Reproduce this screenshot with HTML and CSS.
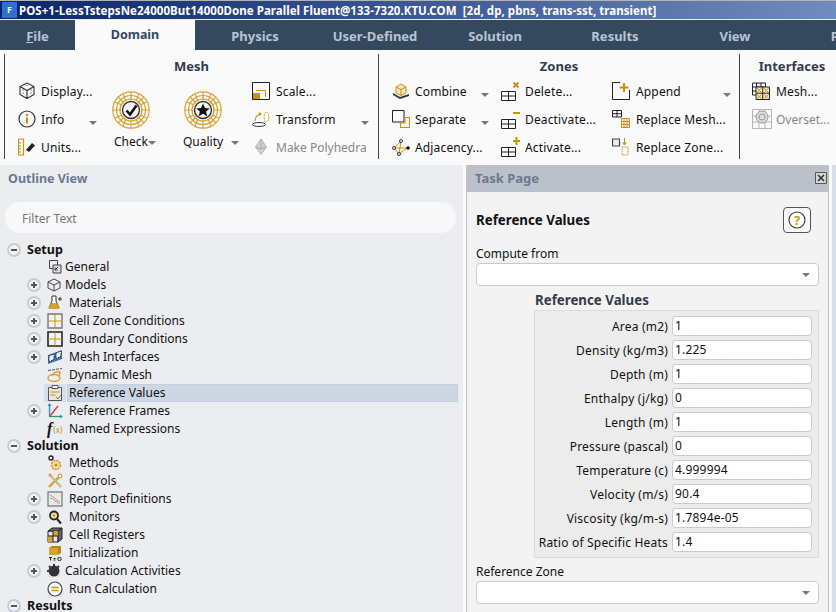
FILE: index.html
```html
<!DOCTYPE html>
<html lang="en">
<head>
    <meta charset="UTF-8">
    <title>Fluent</title>
    <link rel="stylesheet" href="styles.css">
</head>
<body>
    <svg class="defs" width="0" height="0">
        <symbol id="radial" viewBox="0 0 38 38">
            <g fill="none" stroke="#d9a12e" stroke-width="1.2">
                <circle cx="19" cy="19" r="18.2"/>
                <circle cx="19" cy="19" r="14.5"/>
                <circle cx="19" cy="19" r="11"/>
                <path d="M19 1v8M19 29v8M1 19h8M29 19h8M6 6l6 6M26 26l6 6M32 6l-6 6M12 26l-6 6M11 3l3 7M24 28l3 7M27 3l-3 7M14 28l-3 7M3 11l7 3M28 24l7 3M35 11l-7 3M10 24l-7 3"/>
            </g>
            <circle cx="19" cy="19" r="8.5" fill="#f4f4f4" stroke="#333" stroke-width="1.4"/>
        </symbol>
        <symbol id="grid" viewBox="0 0 20 20">
            <path d="M1.500 10.500h14v9h-14zM8.500 10.500v9M1.500 15h14" fill="none" stroke="#222" stroke-width="1"/>
        </symbol>
    </svg>

    <div class="titlebar">
        <span class="app-icon">F</span>
        <span class="title-text">POS+1-LessTstepsNe24000But14000Done Parallel Fluent@133-7320.KTU.COM&nbsp; [2d, dp, pbns, trans-sst, transient]</span>
    </div>

    <div class="tabs">
        <div class="tab tab-file"><u>F</u>ile</div>
        <div class="tab active">Domain</div>
        <div class="tab">Physics</div>
        <div class="tab">User-Defined</div>
        <div class="tab">Solution</div>
        <div class="tab">Results</div>
        <div class="tab">View</div>
        <div class="tab">Parallel</div>
    </div>

    <div class="ribbon">
        <section class="group group-mesh">
            <h3>Mesh</h3>
            <div class="group-body">
                <div class="tool-col col-a">
                    <div class="tool">
                        <svg class="icon" width="18" height="18" viewBox="0 0 18 18"><path d="M9 1l7 3.500v8L9 16.500 2 12.500v-8zM2 4.500l7 4 7-4M9 8.500v8" fill="none" stroke="#333" stroke-width="1.100"/><path d="M9 3.500h.1M5 8h.1M13 8h.1M5 11h.1M13 11h.1" stroke="#333" stroke-width="1.200" stroke-linecap="round"/></svg>
                        <span>Display...</span>
                    </div>
                    <div class="tool">
                        <svg class="icon" width="18" height="18" viewBox="0 0 18 18"><circle cx="9" cy="9" r="8" fill="#fafafa" stroke="#333" stroke-width="1.200"/><path d="M9 7.500v6" stroke="#c8920f" stroke-width="2"/><circle cx="9" cy="5" r="1.200" fill="#c8920f"/></svg>
                        <span>Info</span><i class="drop"></i>
                    </div>
                    <div class="tool">
                        <svg class="icon" width="18" height="18" viewBox="0 0 18 18"><path d="M.5 1h5v16h-5zM.5 5h2.500M.5 8h2.500M.5 11h2.500M.5 14h2.500" fill="none" stroke="#c8920f" stroke-width="1.200"/><path d="M8 12l6-7 3 2.500-6 6.500z" fill="#222"/></svg>
                        <span>Units...</span>
                    </div>
                </div>
                <div class="big-tool col-check">
                    <svg class="big-icon" width="38" height="38"><use href="#radial"/></svg>
                    <div class="big-label label-check"><span>Check</span><i class="drop"></i></div>
                    <svg class="big-mark" width="38" height="38" viewBox="0 0 38 38"><path d="M14.500 19.500l3.500 4 6.500-9" fill="none" stroke="#111" stroke-width="2.600"/></svg>
                </div>
                <div class="big-tool col-quality">
                    <svg class="big-icon" width="38" height="38"><use href="#radial"/></svg>
                    <div class="big-label label-quality"><span>Quality</span><i class="drop"></i></div>
                    <svg class="big-mark" width="38" height="38" viewBox="0 0 38 38"><path d="M19 12.500l2 4.500 4.800.4-3.700 3.100 1.200 4.800-4.300-2.600-4.300 2.600 1.200-4.800-3.700-3.100 4.800-.4z" fill="#111"/></svg>
                </div>
                <div class="tool-col col-c">
                    <div class="tool">
                        <svg class="icon" width="18" height="18" viewBox="0 0 18 18"><path d="M.5.500h17v17H.5z" fill="#fafafa" stroke="#222"/><path d="M4 8.500h9.500V15" fill="none" stroke="#c8920f"/><path d="M1 11h7v6H1z" fill="#c8920f"/></svg>
                        <span>Scale...</span>
                    </div>
                    <div class="tool">
                        <svg class="icon" width="18" height="18" viewBox="0 0 18 18"><ellipse cx="7" cy="14.500" rx="6.500" ry="2" fill="none" stroke="#333"/><path d="M3 11c0-4 2-6 6-7" fill="none" stroke="#c8920f" stroke-width="1.200"/><path d="M7 2l3 2-3 2z" fill="#c8920f"/><ellipse cx="14.500" cy="7" rx="2.300" ry="5" fill="none" stroke="#c8920f" stroke-dasharray="1.500 1"/></svg>
                        <span>Transform</span><i class="drop"></i>
                    </div>
                    <div class="tool disabled">
                        <svg class="icon" width="18" height="18" viewBox="0 0 18 18"><path d="M9 1l5.500 8L9 16.500 3.500 9z" fill="#d2d0cc" stroke="#b5b3ae"/><path d="M3.500 9L9 11l5.500-2M9 1v10" fill="none" stroke="#aaa"/></svg>
                        <span>Make Polyhedra</span>
                    </div>
                </div>
            </div>
        </section>

        <section class="group group-zones">
            <h3>Zones</h3>
            <div class="group-body">
                <div class="tool-col col-d">
                    <div class="tool">
                        <svg class="icon" width="18" height="18" viewBox="0 0 18 18"><path d="M1 11l7 4 9-3v2l-9 3-7-4z" fill="#333"/><path d="M4 5l5-3 5 3v6l-5 2.500-5-2.500z" fill="#f6e7c3" stroke="#c8920f"/><path d="M4 5l5 2.500L14 5M9 7.500v6" fill="none" stroke="#c8920f"/></svg>
                        <span>Combine</span><i class="drop"></i>
                    </div>
                    <div class="tool">
                        <svg class="icon" width="18" height="18" viewBox="0 0 18 18"><path d="M.5.500h11.500v11.500H.5z" fill="none" stroke="#222"/><path d="M8.500 17.500V13H13V7.500h4.500v10z" fill="none" stroke="#c8920f" stroke-width="1.100"/></svg>
                        <span>Separate</span><i class="drop"></i>
                    </div>
                    <div class="tool">
                        <svg class="icon" width="18" height="18" viewBox="0 0 18 18"><path d="M2 10l7-7M2 10l5 6M7 16l8-6H2M9 3l-2 13" fill="none" stroke="#c8920f"/><circle cx="2" cy="10" r="1.500" fill="#fafafa" stroke="#333"/><circle cx="9" cy="3" r="1.500" fill="#fafafa" stroke="#333"/><circle cx="7" cy="16" r="1.500" fill="#fafafa" stroke="#333"/><circle cx="16" cy="10" r="1.800" fill="#111"/></svg>
                        <span>Adjacency...</span>
                    </div>
                </div>
                <div class="tool-col col-e">
                    <div class="tool">
                        <svg class="icon" width="20" height="20" viewBox="0 0 20 20"><use href="#grid"/><path d="M13.500 1.500l5 5M18.500 1.500l-5 5" stroke="#c8920f" stroke-width="2"/></svg>
                        <span>Delete...</span>
                    </div>
                    <div class="tool">
                        <svg class="icon" width="20" height="20" viewBox="0 0 20 20"><use href="#grid"/><path d="M13 4h8" stroke="#c8920f" stroke-width="2"/></svg>
                        <span>Deactivate...</span>
                    </div>
                    <div class="tool">
                        <svg class="icon" width="20" height="20" viewBox="0 0 20 20"><use href="#grid"/><path d="M16.500 0v8M13 4h8" stroke="#c8920f" stroke-width="2"/></svg>
                        <span>Activate...</span>
                    </div>
                </div>
                <div class="tool-col col-f">
                    <div class="tool">
                        <svg class="icon" width="18" height="18" viewBox="0 0 18 18"><path d="M8 .500H.5v17h17V8" fill="none" stroke="#222"/><path d="M12 1v9M7.500 5.500h9" stroke="#c8920f" stroke-width="2"/></svg>
                        <span>Append</span><i class="drop"></i>
                    </div>
                    <div class="tool">
                        <svg class="icon" width="18" height="18" viewBox="0 0 18 18"><path d="M.5.500H9.500V7H.5zM5 .500V7M.5 3.700h9" fill="none" stroke="#222"/><path d="M9.500 8.500h8v9h-8zM12 8.500v9M15 8.500v9M9.500 11.500h8M9.500 14.500h8" fill="none" stroke="#c8920f"/></svg>
                        <span>Replace Mesh...</span>
                    </div>
                    <div class="tool">
                        <svg class="icon" width="18" height="18" viewBox="0 0 18 18"><path d="M.5 1h7v7h-7z" fill="#eee" stroke="#444" stroke-width="1.200"/><path d="M10 9h6v8h-6z" fill="none" stroke="#c8920f" stroke-dasharray="1.500 1"/><path d="M12.500 0v6M10.500 4l2 3 2-3" fill="none" stroke="#c8920f"/></svg>
                        <span>Replace Zone...</span>
                    </div>
                </div>
            </div>
        </section>

        <section class="group group-interfaces">
            <h3>Interfaces</h3>
            <div class="group-body">
                <div class="tool-col">
                    <div class="tool">
                        <svg class="icon" width="18" height="18" viewBox="0 0 18 18"><path d="M.5 1h13v12H.5zM.5 5h13M.5 9h13M4.500 1v12M9 1v12" fill="none" stroke="#222"/><path d="M4 5h13.500v12.500H4z" fill="#f8ecd2" stroke="#222"/><path d="M10.700 5v12.500M4 11.200h13.500" stroke="#222"/><path d="M5 6l4.500 4.500M9.500 6L5 10.500M12 6l4.500 4.500M16.500 6L12 10.500M5 12.500l4.500 4M9.500 12.500L5 16.500M12 12.500l4.500 4M16.500 12.500L12 16.500" stroke="#c8920f"/></svg>
                        <span>Mesh...</span>
                    </div>
                    <div class="tool disabled">
                        <svg class="icon icon-wide" width="20" height="20" viewBox="0 0 20 20"><path d="M.5.500h19v19H.5zM.5 7h19M.5 13h19M7 .500v19M13 .500v19" fill="none" stroke="#b5b5b5"/><circle cx="10" cy="8" r="6" fill="#ddd" stroke="#999"/><circle cx="10" cy="8" r="3" fill="none" stroke="#999"/></svg>
                        <span>Overset...</span>
                    </div>
                </div>
            </div>
        </section>
    </div>

    <div class="main">
        <div class="outline">
            <div class="panel-title">Outline View</div>
            <div class="filter">Filter Text</div>

            <div class="tree">
                <div class="root"><i class="exp minus"></i><b>Setup</b></div>

                <div class="node tight"><i class="exp none"></i>
                    <span class="node-icon"><svg width="16" height="16" viewBox="0 0 16 16"><path d="M2.500 1.500h8v8h-8z" fill="#eee" stroke="#444"/><path d="M6 6h8v8H6z" fill="#ddd" stroke="#444"/><path d="M11 8l-3 3M8 8.500V11h2.500" fill="none" stroke="#333"/></svg></span>
                    <span class="node-label">General</span></div>
                <div class="node tight"><i class="exp plus"></i>
                    <span class="node-icon"><svg width="14" height="14" viewBox="0 0 14 14"><path d="M7 1l6 3v6l-6 3-6-3V4zM1 4l6 3 6-3M7 7v6" fill="none" stroke="#444"/></svg></span>
                    <span class="node-label">Models</span></div>
                <div class="node"><i class="exp plus"></i>
                    <span class="node-icon"><svg width="16" height="16" viewBox="0 0 16 16"><path d="M5 1h4v5l3 7H2l3-7z" fill="#fafafa" stroke="#333"/><path d="M4 8h6l2.500 6h-11z" fill="#d9a12e"/><path d="M13 2v4M11 4h4" stroke="#333"/></svg></span>
                    <span class="node-label">Materials</span></div>
                <div class="node"><i class="exp plus"></i>
                    <span class="node-icon"><svg width="16" height="16" viewBox="0 0 16 16"><path d="M1 1h14v14H1z" fill="#f2f2f2" stroke="#777" stroke-width="1.400"/><path d="M8 1v14M1 8h14" stroke="#c8920f"/></svg></span>
                    <span class="node-label">Cell Zone Conditions</span></div>
                <div class="node"><i class="exp plus"></i>
                    <span class="node-icon"><svg width="16" height="16" viewBox="0 0 16 16"><path d="M1 1h14v14H1z" fill="#f2f2f2" stroke="#222" stroke-width="1.600"/><path d="M8 1v14M1 8h14" stroke="#c8920f"/></svg></span>
                    <span class="node-label">Boundary Conditions</span></div>
                <div class="node"><i class="exp plus"></i>
                    <span class="node-icon"><svg width="16" height="16" viewBox="0 0 16 16"><path d="M1 6l14-5v9L1 15z" fill="#3d74c4"/><path d="M2 7l5-2v5l-5 3zM9 4l5-2v5l-5 3z" fill="#f0f0f0" stroke="#222" stroke-dasharray="1.500 1"/></svg></span>
                    <span class="node-label">Mesh Interfaces</span></div>
                <div class="node"><i class="exp none"></i>
                    <span class="node-icon"><svg width="16" height="16" viewBox="0 0 16 16"><path d="M1 2.500h14" stroke="#555" stroke-dasharray="3 1" transform="rotate(-8 8 2.500)"/><ellipse cx="7" cy="11" rx="6" ry="3.500" fill="none" stroke="#d9a12e" stroke-width="1.400"/><path d="M5 9c1-3 4-5 8-4l-1 5" fill="none" stroke="#d9a12e" stroke-width="1.400"/></svg></span>
                    <span class="node-label">Dynamic Mesh</span></div>
                <div class="node selected"><i class="exp none"></i>
                    <span class="node-icon"><svg width="16" height="16" viewBox="0 0 16 16"><path d="M1.500 2.500h13v13h-13z" fill="#e8e6df" stroke="#555"/><path d="M5 .500h6v3H5z" fill="#fff" stroke="#555"/><path d="M3.500 7h9M3.500 10h5" stroke="#c8920f"/><path d="M9 12l2 2 3-4" fill="none" stroke="#777"/></svg></span>
                    <span class="node-label">Reference Values</span></div>
                <div class="node"><i class="exp plus"></i>
                    <span class="node-icon"><svg width="16" height="16" viewBox="0 0 16 16"><path d="M2.500 2v12" stroke="#2a8fd0" stroke-width="1.300"/><path d="M2.500 13.500H15" stroke="#2a9a55" stroke-width="1.300"/><path d="M3 13L11 3" stroke="#d8383a" stroke-width="1.300"/><path d="M2.500 0l2 3h-4zM16 13.500l-3 2v-4z" fill="#2a8fd0"/></svg></span>
                    <span class="node-label">Reference Frames</span></div>
                <div class="node"><i class="exp none"></i>
                    <span class="node-icon node-icon-text"><em>f</em><small>(x)</small></span>
                    <span class="node-label">Named Expressions</span></div>

                <div class="root root-tight"><i class="exp minus"></i><b>Solution</b></div>

                <div class="node"><i class="exp none"></i>
                    <span class="node-icon"><svg width="16" height="16" viewBox="0 0 16 16"><circle cx="9" cy="10" r="4.500" fill="#f4dca8" stroke="#c8920f" stroke-width="1.400" stroke-dasharray="2 1"/><circle cx="9" cy="10" r="1.500" fill="#c8920f"/><circle cx="4" cy="3" r="2" fill="none" stroke="#222" stroke-width="1.400"/></svg></span>
                    <span class="node-label">Methods</span></div>
                <div class="node"><i class="exp none"></i>
                    <span class="node-icon"><svg width="16" height="16" viewBox="0 0 16 16"><path d="M2 14L13 3" stroke="#d9a12e" stroke-width="2.400"/><path d="M3 2l11 12" stroke="#c8b48a" stroke-width="2"/><circle cx="13" cy="3" r="2" fill="#fafafa" stroke="#c8920f"/><circle cx="3" cy="2" r="1.500" fill="#d9a12e"/></svg></span>
                    <span class="node-label">Controls</span></div>
                <div class="node"><i class="exp plus"></i>
                    <span class="node-icon"><svg width="16" height="16" viewBox="0 0 16 16"><path d="M1 1h14v14H1z" fill="#e8e8e8" stroke="#888" stroke-width="1.400"/><path d="M3.500 4.500l3 1.500 3 3 3 2" fill="none" stroke="#d8383a" stroke-dasharray="1.500 1"/><path d="M3.500 7l3 1.500 3 2.500 3 1.500" fill="none" stroke="#2a9a55" stroke-dasharray="1.500 1"/></svg></span>
                    <span class="node-label">Report Definitions</span></div>
                <div class="node"><i class="exp plus"></i>
                    <span class="node-icon"><svg width="16" height="16" viewBox="0 0 16 16"><circle cx="7" cy="6.500" r="4" fill="#f4dca8" stroke="#222" stroke-width="1.800"/><circle cx="7" cy="6.500" r="1.200" fill="#c8920f"/><path d="M10 10l4 4.500" stroke="#222" stroke-width="2"/></svg></span>
                    <span class="node-label">Monitors</span></div>
                <div class="node"><i class="exp none"></i>
                    <span class="node-icon"><svg width="16" height="16" viewBox="0 0 16 16"><path d="M1 4h10v11H1z" fill="#e8e8e8" stroke="#222"/><path d="M1 4l4-3h10l-4 3zM11 4l4-3v11l-4 3z" fill="#666" stroke="#222"/><path d="M1 9h5v6H1zM6 4h5v5H6z" fill="#d9a12e"/><path d="M6 4v11M1 9h10" stroke="#222"/></svg></span>
                    <span class="node-label">Cell Registers</span></div>
                <div class="node"><i class="exp none"></i>
                    <span class="node-icon"><svg width="16" height="16" viewBox="0 0 16 16"><path d="M2 3h9v7H2z" fill="#d9a12e"/><path d="M2 3l3-2h9l-3 2zM11 3l3-2v7l-3 2z" fill="#b8860b"/><path d="M2 12.500h3M3.500 12.500V15.500M6.500 13.500h2M6.500 15h2" stroke="#222"/><circle cx="12.500" cy="14" r="1.700" fill="none" stroke="#222"/></svg></span>
                    <span class="node-label">Initialization</span></div>
                <div class="node tight"><i class="exp plus"></i>
                    <span class="node-icon"><svg width="14" height="14" viewBox="0 0 14 14"><circle cx="7" cy="7" r="5.500" fill="#333"/><path d="M7 0v14M0 7h14M2 2l10 10M12 2L2 12" stroke="#333" stroke-width="2" stroke-dasharray="2 8 2 2"/></svg></span>
                    <span class="node-label">Calculation Activities</span></div>
                <div class="node"><i class="exp none"></i>
                    <span class="node-icon"><svg width="16" height="16" viewBox="0 0 16 16"><circle cx="8" cy="8" r="7" fill="#fafafa" stroke="#444" stroke-width="1.200"/><path d="M4.500 6.500h7M4.500 9.500h7" stroke="#c8920f" stroke-width="1.600"/></svg></span>
                    <span class="node-label">Run Calculation</span></div>

                <div class="root root-tight"><i class="exp minus"></i><b>Results</b></div>
            </div>
        </div>

        <div class="task">
            <div class="task-head">
                <span>Task Page</span>
                <svg width="12" height="12" viewBox="0 0 12 12"><path d="M.5.500h11v11H.5z" fill="#d6d6d6" stroke="#555"/><path d="M3 3l6 6M9 3L3 9" stroke="#333" stroke-width="1.600"/></svg>
            </div>
            <div class="task-body">
                <div class="task-title">
                    <b>Reference Values</b>
                    <button class="help"><svg width="18" height="18" viewBox="0 0 18 18"><circle cx="9" cy="9" r="8" fill="#fff" stroke="#333" stroke-width="1.100"/></svg><span>?</span></button>
                </div>
                <label class="field-label">Compute from</label>
                <div class="combo"><i class="drop"></i></div>

                <div class="sub-title">Reference Values</div>
                <div class="values">
                    <div class="value-row"><label>Area (m2)</label><div class="input">1</div></div>
                    <div class="value-row"><label>Density (kg/m3)</label><div class="input">1.225</div></div>
                    <div class="value-row"><label>Depth (m)</label><div class="input">1</div></div>
                    <div class="value-row"><label>Enthalpy (j/kg)</label><div class="input">0</div></div>
                    <div class="value-row"><label>Length (m)</label><div class="input">1</div></div>
                    <div class="value-row"><label>Pressure (pascal)</label><div class="input">0</div></div>
                    <div class="value-row"><label>Temperature (c)</label><div class="input">4.999994</div></div>
                    <div class="value-row"><label>Velocity (m/s)</label><div class="input">90.4</div></div>
                    <div class="value-row"><label>Viscosity (kg/m-s)</label><div class="input">1.7894e-05</div></div>
                    <div class="value-row"><label>Ratio of Specific Heats</label><div class="input">1.4</div></div>
                </div>

                <label class="field-label zone-label">Reference Zone</label>
                <div class="combo"><i class="drop"></i></div>
            </div>
        </div>

        <div class="strip"></div>
    </div>
</body>
</html>
```

FILE: styles.css
```css
html, body { margin: 0; padding: 0; }
body {
    width: 836px;
    height: 612px;
    overflow: hidden;
    background: #fafafa;
    color: #111;
    font-family: "Noto Sans", "DejaVu Sans", sans-serif;
    font-size: 12px;
}
.defs { position: absolute; }

/* title bar */
.titlebar {
    display: flex;
    align-items: center;
    gap: 2px;
    height: 18px;
    border-top: 1px solid #b5b5b0;
    border-bottom: 1px solid #e8ecf2;
    background: linear-gradient(to right, #0a246a, #6f8cc0);
    color: #fff;
    white-space: nowrap;
}
.app-icon {
    flex: none;
    width: 15px;
    height: 16px;
    margin-left: 2px;
    background: #2f6fd0;
    font-size: 9px;
    font-weight: bold;
    line-height: 16px;
    text-align: center;
}
.title-text { font-weight: bold; font-size: 11.500px; letter-spacing: .05px; }

/* tabs */
.tabs {
    display: flex;
    height: 30px;
    background: #34495e;
    overflow: hidden;
}
.tab {
    flex: none;
    width: 120px;
    color: #b8c4d2;
    font-size: 13px;
    font-weight: bold;
    line-height: 32px;
    text-align: center;
}
.tab-file { width: 75px; }
.tab.active {
    background: #fafafa;
    color: #34495e;
    font-size: 12.500px;
    line-height: 30px;
}

/* ribbon */
.ribbon {
    display: flex;
    height: 115px;
    box-sizing: border-box;
    padding: 4px 0 0 4px;
    background: #fafafa;
}
.group {
    flex: none;
    height: 105px;
    box-sizing: border-box;
    border-right: 1px solid #444;
}
.group h3 {
    margin: 0 0 1px;
    color: #333b4d;
    font-size: 13px;
    font-weight: bold;
    line-height: 24px;
    text-align: center;
}
.group-mesh { width: 375px; border-left: 1px solid #444; }
.group-zones { width: 361px; }
.group-interfaces { width: 104px; border-right: 0; }
.group-body { display: flex; }
.group-mesh .group-body { padding-left: 13px; }
.group-zones .group-body { padding-left: 13px; }
.group-interfaces .group-body { padding-left: 12px; }

.tool-col { display: flex; flex-direction: column; gap: 4px; }
.col-a { width: 80px; }
.col-c { width: 118px; margin-left: 10px; }
.col-d { width: 98px; }
.col-e { width: 112px; margin-left: 10px; }
.col-f { width: 120px; }
.tool {
    display: flex;
    align-items: center;
    height: 24px;
    letter-spacing: .15px;
    white-space: nowrap;
}
.tool .icon { flex: none; margin-right: 6px; }
.tool .icon-wide { margin-right: 4px; }
.col-a .icon, .col-d .icon { margin-right: 5px; }
.col-e .icon { margin-right: 5px; }
.tool.disabled { color: #888; letter-spacing: 0; }
.drop {
    display: block;
    flex: none;
    width: 0;
    height: 0;
    margin-top: 8px;
    border-style: solid;
    border-width: 4px 4px 0;
    border-color: #777 transparent transparent;
}
.tool .drop { margin-left: auto; margin-right: 1px; }

.big-tool { position: relative; flex: none; }
.big-icon { display: block; margin: 12px auto 4px; }
.big-mark { position: absolute; top: 12px; left: 50%; margin-left: -19px; }
.big-label { display: flex; align-items: center; height: 16px; }
.big-label .drop { margin-top: 4px; }
.col-check { width: 66px; }
.col-quality { width: 78px; }
.label-check { padding-left: 16px; }
.label-quality { padding-left: 19px; gap: 8px; }

/* main area */
.main { display: flex; height: 447px; }
.outline { flex: none; width: 463px; background: #ecedf0; }
.panel-title {
    height: 27px;
    padding-left: 8px;
    color: #6b7a90;
    font-size: 12.500px;
    font-weight: bold;
    line-height: 27px;
}
.filter {
    height: 31px;
    margin: 10px 7px 8px 5px;
    padding-left: 17px;
    border-radius: 15px;
    background: #f8f8f9;
    color: #777;
    line-height: 33px;
}

.root {
    display: flex;
    align-items: center;
    height: 17px;
    padding-left: 7px;
    font-size: 12.500px;
}
.root-tight { margin-top: -1px; }
.root b { margin-left: 6px; }
.node {
    display: flex;
    align-items: center;
    height: 18px;
    margin-right: 5px;
    padding-left: 27px;
}
.exp {
    position: relative;
    flex: none;
    box-sizing: border-box;
    width: 14px;
    height: 14px;
    border: 2px solid #c6ccd5;
    border-radius: 50%;
    background: #f2f3f5;
}
.exp.none { visibility: hidden; }
.exp::before {
    content: "";
    position: absolute;
    left: 2px;
    top: 4px;
    width: 6px;
    height: 2px;
    background: #555;
}
.exp.plus::after {
    content: "";
    position: absolute;
    left: 4px;
    top: 2px;
    width: 2px;
    height: 6px;
    background: #555;
}
.node .exp { margin-right: 3px; }
.node-icon {
    display: flex;
    align-items: center;
    flex: none;
    box-sizing: border-box;
    width: 22px;
    height: 18px;
    padding-left: 3px;
}
.node-label { flex: 1; margin-left: 3px; line-height: 18px; white-space: nowrap; }
.tight .node-label { margin-left: -1px; }
.node.selected .node-icon { background: #d6dee9; }
.node.selected .node-label {
    box-sizing: border-box;
    height: 18px;
    margin-left: 1px;
    padding-left: 1px;
    border: 1px solid #c4cfdd;
    background: #cdd7e4;
    line-height: 16px;
}
.node-icon-text em {
    font-family: "Liberation Serif", serif;
    font-size: 16px;
    font-weight: bold;
}
.node-icon-text small { color: #c8920f; font-size: 8px; margin-left: 1px; }

/* task page */
.task {
    flex: none;
    box-sizing: border-box;
    width: 363px;
    margin-left: 3px;
    border: 1px solid #bcc1c9;
    border-width: 0 1px;
    background: #f3f3f3;
}
.task-head {
    display: flex;
    align-items: center;
    justify-content: space-between;
    box-sizing: border-box;
    height: 27px;
    padding: 0 1px 2px 8px;
    background: #bcc1c9;
    color: #6b7a90;
    font-size: 13px;
    font-weight: bold;
}
.task-body { padding: 0 9px; }
.task-title {
    display: flex;
    align-items: center;
    justify-content: space-between;
    height: 27px;
    margin-top: 14px;
    padding-right: 8px;
    font-size: 13.300px;
}
.help {
    position: relative;
    display: flex;
    align-items: center;
    justify-content: center;
    width: 28px;
    height: 26px;
    padding: 0;
    border: 1px solid #555;
    border-radius: 4px;
    background: #fafafa;
}
.help span {
    position: absolute;
    color: #c8920f;
    font-family: "Noto Sans", sans-serif;
    font-size: 13px;
    font-weight: bold;
}
.field-label { display: block; margin-top: 13px; line-height: 16px; }
.zone-label { margin-top: 6px; }
.combo {
    display: flex;
    align-items: center;
    justify-content: flex-end;
    box-sizing: border-box;
    height: 23px;
    margin-top: 1px;
    padding-right: 8px;
    border: 1px solid #c4cbd6;
    border-radius: 4px;
    background: #fff;
}
.combo .drop { margin-top: 1px; }
.sub-title {
    margin: 6px 0 0 59px;
    color: #333b4d;
    font-size: 13.300px;
    font-weight: bold;
    line-height: 16px;
}
.values {
    display: flex;
    flex-direction: column;
    gap: 4px;
    box-sizing: border-box;
    height: 248px;
    margin: 2px 0 0 58px;
    padding: 5px 6px 0 0;
    border: 1px solid #dcdcdc;
    background: #ececec;
}
.value-row {
    display: flex;
    align-items: center;
    justify-content: flex-end;
    gap: 4px;
    height: 20px;
    letter-spacing: .2px;
}
.input {
    box-sizing: border-box;
    width: 140px;
    height: 20px;
    padding-left: 2px;
    border: 1px solid #c4cbd6;
    border-radius: 4px;
    background: #fff;
    line-height: 18px;
}
.strip { flex: none; width: 4px; margin-left: 3px; background: #d8dde6; }
```
